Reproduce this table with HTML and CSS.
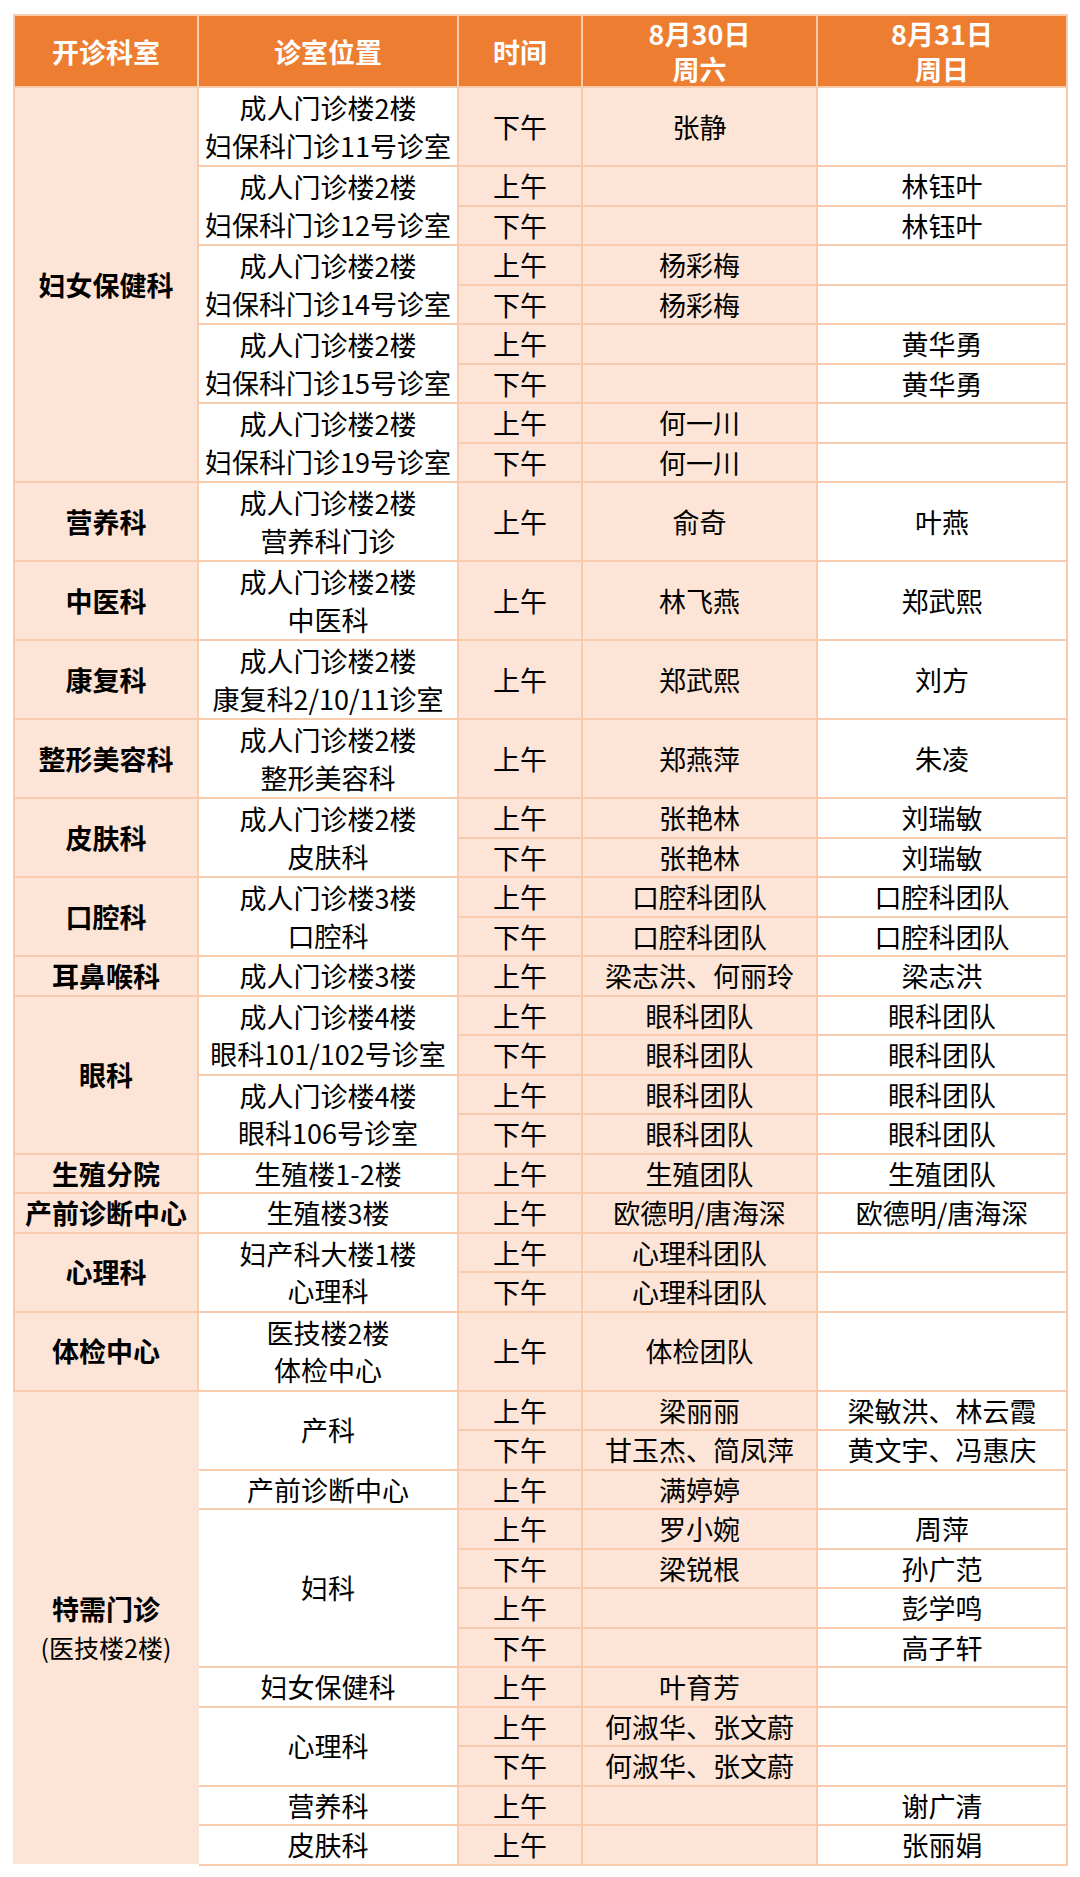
FILE: index.html
```html
<!DOCTYPE html>
<html lang="zh-CN">
<head>
<meta charset="utf-8">
<title>门诊排班表</title>
<link rel="stylesheet" href="styles.css">
</head>
<body>
<table class="schedule">
  <colgroup>
    <col class="c-dept"><col class="c-loc"><col class="c-time"><col class="c-sat"><col class="c-sun">
  </colgroup>
  <thead>
    <tr class="head">
      <th>开诊科室</th><th>诊室位置</th><th>时间</th><th>8月30日<br>周六</th><th>8月31日<br>周日</th>
    </tr>
  </thead>
  <tbody>
    <tr class="dbl"><td class="dept" rowspan="9">妇女保健科</td><td class="loc">成人门诊楼2楼<br>妇保科门诊11号诊室</td><td class="time">下午</td><td class="sat">张静</td><td class="sun"></td></tr>
    <tr><td class="loc" rowspan="2">成人门诊楼2楼<br>妇保科门诊12号诊室</td><td class="time">上午</td><td class="sat"></td><td class="sun">林钰叶</td></tr>
    <tr><td class="time">下午</td><td class="sat"></td><td class="sun">林钰叶</td></tr>
    <tr><td class="loc" rowspan="2">成人门诊楼2楼<br>妇保科门诊14号诊室</td><td class="time">上午</td><td class="sat">杨彩梅</td><td class="sun"></td></tr>
    <tr><td class="time">下午</td><td class="sat">杨彩梅</td><td class="sun"></td></tr>
    <tr><td class="loc" rowspan="2">成人门诊楼2楼<br>妇保科门诊15号诊室</td><td class="time">上午</td><td class="sat"></td><td class="sun">黄华勇</td></tr>
    <tr><td class="time">下午</td><td class="sat"></td><td class="sun">黄华勇</td></tr>
    <tr><td class="loc" rowspan="2">成人门诊楼2楼<br>妇保科门诊19号诊室</td><td class="time">上午</td><td class="sat">何一川</td><td class="sun"></td></tr>
    <tr><td class="time">下午</td><td class="sat">何一川</td><td class="sun"></td></tr>

    <tr class="dbl"><td class="dept">营养科</td><td class="loc">成人门诊楼2楼<br>营养科门诊</td><td class="time">上午</td><td class="sat">俞奇</td><td class="sun">叶燕</td></tr>
    <tr class="dbl"><td class="dept">中医科</td><td class="loc">成人门诊楼2楼<br>中医科</td><td class="time">上午</td><td class="sat">林飞燕</td><td class="sun">郑武熙</td></tr>
    <tr class="dbl"><td class="dept">康复科</td><td class="loc">成人门诊楼2楼<br>康复科2/10/11诊室</td><td class="time">上午</td><td class="sat">郑武熙</td><td class="sun">刘方</td></tr>
    <tr class="dbl"><td class="dept">整形美容科</td><td class="loc">成人门诊楼2楼<br>整形美容科</td><td class="time">上午</td><td class="sat">郑燕萍</td><td class="sun">朱凌</td></tr>

    <tr><td class="dept" rowspan="2">皮肤科</td><td class="loc" rowspan="2">成人门诊楼2楼<br>皮肤科</td><td class="time">上午</td><td class="sat">张艳林</td><td class="sun">刘瑞敏</td></tr>
    <tr><td class="time">下午</td><td class="sat">张艳林</td><td class="sun">刘瑞敏</td></tr>

    <tr><td class="dept" rowspan="2">口腔科</td><td class="loc" rowspan="2">成人门诊楼3楼<br>口腔科</td><td class="time">上午</td><td class="sat">口腔科团队</td><td class="sun">口腔科团队</td></tr>
    <tr><td class="time">下午</td><td class="sat">口腔科团队</td><td class="sun">口腔科团队</td></tr>

    <tr><td class="dept">耳鼻喉科</td><td class="loc">成人门诊楼3楼</td><td class="time">上午</td><td class="sat">梁志洪、何丽玲</td><td class="sun">梁志洪</td></tr>

    <tr><td class="dept" rowspan="4">眼科</td><td class="loc" rowspan="2">成人门诊楼4楼<br>眼科101/102号诊室</td><td class="time">上午</td><td class="sat">眼科团队</td><td class="sun">眼科团队</td></tr>
    <tr><td class="time">下午</td><td class="sat">眼科团队</td><td class="sun">眼科团队</td></tr>
    <tr><td class="loc" rowspan="2">成人门诊楼4楼<br>眼科106号诊室</td><td class="time">上午</td><td class="sat">眼科团队</td><td class="sun">眼科团队</td></tr>
    <tr><td class="time">下午</td><td class="sat">眼科团队</td><td class="sun">眼科团队</td></tr>

    <tr><td class="dept">生殖分院</td><td class="loc">生殖楼1-2楼</td><td class="time">上午</td><td class="sat">生殖团队</td><td class="sun">生殖团队</td></tr>
    <tr><td class="dept">产前诊断中心</td><td class="loc">生殖楼3楼</td><td class="time">上午</td><td class="sat">欧德明/唐海深</td><td class="sun">欧德明/唐海深</td></tr>

    <tr><td class="dept" rowspan="2">心理科</td><td class="loc" rowspan="2">妇产科大楼1楼<br>心理科</td><td class="time">上午</td><td class="sat">心理科团队</td><td class="sun"></td></tr>
    <tr><td class="time">下午</td><td class="sat">心理科团队</td><td class="sun"></td></tr>

    <tr class="dbl"><td class="dept">体检中心</td><td class="loc">医技楼2楼<br>体检中心</td><td class="time">上午</td><td class="sat">体检团队</td><td class="sun"></td></tr>

    <tr><td class="dept special" rowspan="12">特需门诊<br><span class="sub">(医技楼2楼)</span></td><td class="loc" rowspan="2">产科</td><td class="time">上午</td><td class="sat">梁丽丽</td><td class="sun">梁敏洪、林云霞</td></tr>
    <tr><td class="time">下午</td><td class="sat">甘玉杰、简凤萍</td><td class="sun">黄文宇、冯惠庆</td></tr>
    <tr><td class="loc">产前诊断中心</td><td class="time">上午</td><td class="sat">满婷婷</td><td class="sun"></td></tr>
    <tr><td class="loc" rowspan="4">妇科</td><td class="time">上午</td><td class="sat">罗小婉</td><td class="sun">周萍</td></tr>
    <tr><td class="time">下午</td><td class="sat">梁锐根</td><td class="sun">孙广范</td></tr>
    <tr><td class="time">上午</td><td class="sat"></td><td class="sun">彭学鸣</td></tr>
    <tr><td class="time">下午</td><td class="sat"></td><td class="sun">高子轩</td></tr>
    <tr><td class="loc">妇女保健科</td><td class="time">上午</td><td class="sat">叶育芳</td><td class="sun"></td></tr>
    <tr><td class="loc" rowspan="2">心理科</td><td class="time">上午</td><td class="sat">何淑华、张文蔚</td><td class="sun"></td></tr>
    <tr><td class="time">下午</td><td class="sat">何淑华、张文蔚</td><td class="sun"></td></tr>
    <tr><td class="loc">营养科</td><td class="time">上午</td><td class="sat"></td><td class="sun">谢广清</td></tr>
    <tr><td class="loc">皮肤科</td><td class="time">上午</td><td class="sat"></td><td class="sun">张丽娟</td></tr>
  </tbody>
</table>
</body>
</html>
```

FILE: styles.css
```css
html, body {
  margin: 0;
  padding: 0;
  background: #ffffff;
}

body {
  font-family: "Noto Sans CJK SC", "Noto Sans", sans-serif;
  color: #000000;
}

.schedule {
  margin: 14px 0 0 13px;
  width: 1053px;
  border-collapse: collapse;
  table-layout: fixed;
}

.c-dept { width: 184px; }
.c-loc  { width: 260px; }
.c-time { width: 124px; }
.c-sat  { width: 235px; }
.c-sun  { width: 250px; }

.schedule th,
.schedule td {
  border: 2px solid #F8CBAD;
  padding: 0;
  text-align: center;
  vertical-align: middle;
  font-size: 27px;
  line-height: 37.4px;
  white-space: nowrap;
}

.schedule tbody tr {
  height: 39.5px;
}

.schedule tbody tr.dbl {
  height: 79px;
}

.schedule tr.head {
  height: 72px;
}

.schedule th {
  background: #ED7D31;
  color: #ffffff;
  font-weight: 700;
  line-height: 35px;
}

.dept {
  background: #FCE4D6;
  font-weight: 700;
}

.time,
.sat {
  background: #FCE4D6;
}

.loc,
.sun {
  background: #ffffff;
}

.special {
  border-left-color: #FCE4D6 !important;
  border-right-color: #FCE4D6 !important;
  border-bottom-color: #ffffff !important;
  line-height: 38px !important;
}

.sub {
  font-weight: 400;
  font-size: 25px;
}
```
